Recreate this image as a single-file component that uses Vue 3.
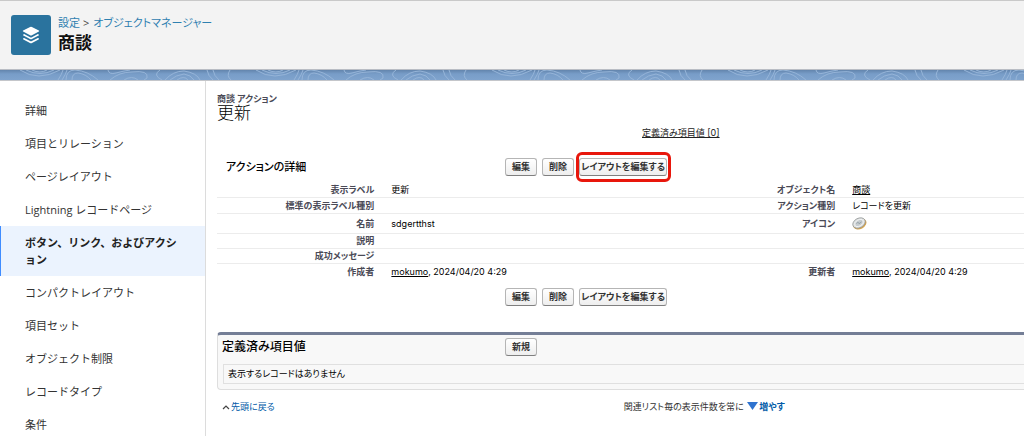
<script setup>
const navItems = [
  '詳細',
  '項目とリレーション',
  'ページレイアウト',
  'Lightning レコードページ',
  'ボタン、リンク、およびアクション',
  'コンパクトレイアウト',
  '項目セット',
  'オブジェクト制限',
  'レコードタイプ',
  '条件',
]
const activeItem = 'ボタン、リンク、およびアクション'
const stamp = { user: 'mokumo', time: '2024/04/20 4:29' }
</script>

<template>
  <div class="page">
    <header class="header">
      <svg class="logo" viewBox="0 0 40 40" aria-hidden="true">
        <rect width="40" height="40" rx="3" fill="#2a739e" />
        <path d="M19.1 11.9 12.1 15.6q-.8.5 0 1l7 3.7q.9.4 1.8 0l7-3.7q.8-.5 0-1l-7-3.7q-.9-.4-1.8 0z" fill="#fff" />
        <path d="M12.4 19.4q-.9.6 0 1.2l6.6 3.5q1 .5 2 0l6.6-3.5q.9-.6 0-1.2l-.7-.3-6 3.1q-.9.4-1.8 0l-6-3.1z" fill="#fff" />
        <path d="M12.4 23.3q-.9.6 0 1.2l6.6 3.5q1 .5 2 0l6.6-3.5q.9-.6 0-1.2l-.7-.3-6 3.1q-.9.4-1.8 0l-6-3.1z" fill="#fff" />
      </svg>
      <div>
        <nav class="crumbs" aria-label="パンくずリスト">
          <a href="#">設定</a><span class="sep">&gt;</span><a href="#">オブジェクトマネージャー</a>
        </nav>
        <h1>商談</h1>
      </div>
    </header>

    <svg class="band" aria-hidden="true">
      <defs>
        <linearGradient id="shade" x1="0" y1="0" x2="0" y2="1">
          <stop offset="0" stop-color="#6385ad" />
          <stop offset=".4" stop-color="#789dc8" />
          <stop offset="1" stop-color="#7fa3cd" />
        </linearGradient>
        <pattern id="contour" width="236" height="10" patternUnits="userSpaceOnUse">
          <g fill="none" stroke="#95b4d8" stroke-width="1">
            <path d="M20 0Q38 12 60 0M26 0Q40 7 54 0M32 0Q40 4 47 0" />
            <path d="M58 10Q62 4 63 0M62 10Q66 4 67 0" />
            <path d="M66 10Q66 0 75 0Q88 1 98 10M72 10Q72 3 78 3Q86 4 91 10" />
            <path d="M108 0Q109 5 116 3T130 0M110 10Q119 2 132 2Q149 0 147 8L144 10M124 10Q132 5 138 10" />
            <path d="M162 10Q152 5 160 0M165 10Q173 1 184 1Q197 3 200 10M170 10Q176 5 184 4Q191 5 194 10M177 10Q184 5 188 10" />
            <path d="M207 0Q208 6 213 10M213 0Q214 6 219 10M230 0Q226 6 231 10" />
          </g>
        </pattern>
      </defs>
      <rect width="100%" height="10" fill="url(#shade)" />
      <rect width="100%" height="10" fill="url(#contour)" />
    </svg>

    <div class="body">
      <nav class="side" aria-label="オブジェクト設定">
        <a v-for="item in navItems" :key="item" href="#" :class="{ active: item === activeItem }">{{ item }}</a>
      </nav>

      <main class="main">
        <p class="kind">商談 アクション</p>
        <h2 class="name">更新</h2>
        <div class="jump"><a href="#related">定義済み項目値 [0]</a></div>

        <div class="bar">
          <h3 class="indent">アクションの詳細</h3>
          <div class="buttons">
            <button type="button">編集</button>
            <button type="button">削除</button>
            <button type="button" class="long marked">レイアウトを編集する</button>
          </div>
        </div>

        <table class="detail">
          <tbody>
            <tr>
              <th scope="row">表示ラベル</th><td class="wide">更新</td>
              <th scope="row">オブジェクト名</th><td><a href="#">商談</a></td>
            </tr>
            <tr>
              <th scope="row">標準の表示ラベル種別</th><td></td>
              <th scope="row">アクション種別</th><td>レコードを更新</td>
            </tr>
            <tr class="tall">
              <th scope="row">名前</th><td>sdgertthst</td>
              <th scope="row">アイコン</th>
              <td>
                <svg class="coin" viewBox="0 0 15 13" role="img" aria-label="アイコン">
                  <ellipse cx="7.8" cy="7" rx="7" ry="5" transform="rotate(-28 7.8 7)" fill="#d4a44e" />
                  <ellipse cx="7" cy="6" rx="6.6" ry="4.7" transform="rotate(-28 7 6)" fill="#dfe2e3" stroke="#8c8f90" stroke-width=".7" />
                  <ellipse cx="7" cy="6" rx="4.6" ry="3" transform="rotate(-28 7 6)" fill="#c6cccf" stroke="#f5f6f6" stroke-width=".8" />
                  <path d="M4.5 6.7l1.5-1.5 1 1.5 2.5-1.8" fill="none" stroke="#8b989f" stroke-width=".8" />
                </svg>
              </td>
            </tr>
            <tr class="short"><th scope="row">説明</th><td></td><td></td><td></td></tr>
            <tr class="short"><th scope="row">成功メッセージ</th><td></td><td></td><td></td></tr>
            <tr>
              <th scope="row">作成者</th><td><a href="#">{{ stamp.user }}</a>, {{ stamp.time }}</td>
              <th scope="row">更新者</th><td><a href="#">{{ stamp.user }}</a>, {{ stamp.time }}</td>
            </tr>
          </tbody>
        </table>

        <div class="bar">
          <span></span>
          <div class="buttons">
            <button type="button">編集</button>
            <button type="button">削除</button>
            <button type="button" class="long">レイアウトを編集する</button>
          </div>
        </div>

        <section id="related" class="related">
          <div class="bar">
            <h3 class="list-title">定義済み項目値</h3>
            <div class="buttons"><button type="button">新規</button></div>
          </div>
          <p class="empty">表示するレコードはありません</p>
        </section>

        <div class="foot">
          <a href="#">
            <svg class="up" viewBox="0 0 8 6" aria-hidden="true"><path d="M1 5 4 2l3 3" fill="none" stroke="#444" stroke-width="1.2" /></svg>先頭に戻る</a>
          <div class="more">
            関連リスト毎の表示件数を常に
            <svg class="down" viewBox="0 0 11 8" aria-hidden="true"><path d="M0 0h11L5.500 8z" fill="#2f73cf" /></svg>
            <a href="#"><b>増やす</b></a>
          </div>
        </div>
      </main>
    </div>
  </div>
</template>

<style>
body {
  margin: 0;
  background: #fff;
  overflow: hidden;
}
</style>

<style scoped>
.page {
  font-family: "Open Sans", "Noto Sans CJK JP", sans-serif;
  color: #222;
}
h1, h2, h3, p { margin: 0; }
.header {
  display: flex;
  align-items: center;
  gap: 7px;
  height: 68px;
  padding-left: 11px;
  background: #f3f3f3;
  border-top: 1px solid #c9c9c9;
  border-bottom: 1px solid #b9bdc4;
}
.logo { width: 40px; height: 40px; display: block; }
.crumbs {
  font-size: 11px;
  line-height: 16px;
  font-feature-settings: "palt";
}
.crumbs a { color: #2f80b0; text-decoration: none; }
.sep { margin: 0 4px 0 3px; color: #444; }
h1 { font-size: 17px; line-height: 24px; color: #111; }
.band { display: block; width: 100%; height: 10px; border-bottom: 1px solid #c4c6ca; }
.body { display: flex; }
.side {
  flex: 0 0 205px;
  padding-top: 13px;
  border-right: 1px solid #dcdcdc;
}
.side a {
  display: block;
  padding: 8px 20px 8px 24px;
  border-left: 1px solid transparent;
  font-size: 11px;
  line-height: 17px;
  color: #333;
  text-decoration: none;
}
.side a.active {
  background: #ebf3fe;
  border-left-color: #3f8cff;
  font-weight: 600;
  color: #222;
}
.main {
  flex: 1;
  min-width: 0;
  padding: 12px 0 0 11px;
  font-family: Inter, "Noto Sans CJK JP", sans-serif;
  font-size: 9px;
  line-height: 12px;
  font-feature-settings: "palt";
  color: #000;
}
.kind { font-weight: 700; color: #4a4a56; }
.name { font-size: 17px; line-height: 16px; font-weight: 300; }
.jump { padding-left: 425px; margin-top: 6px; }
.jump a { color: #222; }
.bar {
  display: grid;
  grid-template-columns: 288px 1fr;
  align-items: center;
  height: 18px;
}
.jump + .bar { margin: 19px 0 6px; }
h3 { font-size: 11px; line-height: 18px; font-weight: 500; }
.list-title { font-size: 12px; }
.indent { padding-left: 9px; }
.buttons { display: flex; gap: 5px; }
button {
  box-sizing: border-box;
  height: 18px;
  padding: 0 6px;
  border: 1px solid #b5b5b5;
  border-bottom-color: #7f7f7f;
  border-radius: 3px;
  background: linear-gradient(#fff, #eee);
  color: #333;
  font: 700 9px/14px Inter, "Noto Sans CJK JP", sans-serif;
  font-feature-settings: "palt";
}
.long { padding: 0 1px; }
.marked { position: relative; }
.marked::after {
  content: "";
  position: absolute;
  inset: -7px -5px -7px -4px;
  border: 3px solid #e8170c;
  border-radius: 6px;
}
.detail {
  width: 100%;
  table-layout: fixed;
  border-collapse: collapse;
}
.detail th, .detail td {
  height: 15px;
  padding: 0;
  border-bottom: 1px solid #ececec;
  text-align: left;
  vertical-align: middle;
  white-space: nowrap;
}
.detail th {
  width: 19.5%;
  padding-right: 17px;
  text-align: right;
  color: #4a4a56;
}
.detail .wide { width: 35.5%; }
.detail .tall > * { height: 19px; }
.detail .short > * { height: 14px; }
.detail tr:last-child > * { border-bottom: 0; }
.detail a { color: inherit; }
.coin { display: block; width: 15px; height: 13px; }
.detail + .bar { margin: 9px 0 26px; }
.related {
  border: 1px solid #dedede;
  border-top: 3px solid #747e96;
  border-right: 0;
  border-radius: 4px 0 0 4px;
  background: #f8f8f8;
  padding: 3px 0 5px 4px;
}
.related .bar { grid-template-columns: 283px 1fr; }
.empty {
  margin: 8px 0 0 1px;
  padding: 3px 4px;
  border: 1px solid #e0e0e0;
  border-right: 0;
}
.foot { display: flex; margin-top: 11px; padding-left: 5px; }
.foot a { color: #015ba7; text-decoration: none; }
.up { width: 8px; height: 6px; margin-right: 1px; }
.more { margin-left: 349px; color: #333; }
.down { width: 11px; height: 8px; margin: 0 1px; }
</style>
